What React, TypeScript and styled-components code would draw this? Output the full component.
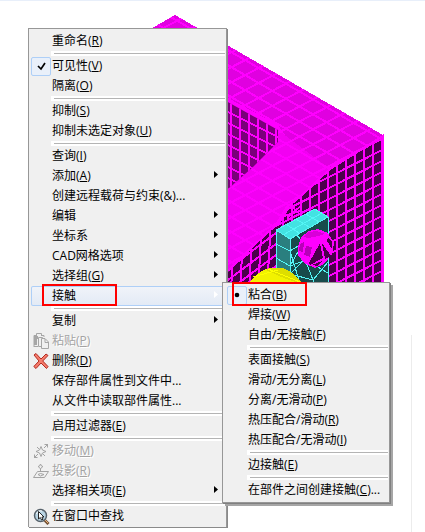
import React from "react";
import styled, { createGlobalStyle, css } from "styled-components";

const GlobalStyle = createGlobalStyle`
  * { box-sizing: border-box; }
  body { margin: 0; background: #fff; }
`;

const Page = styled.main`
  position: relative;
  min-height: 100vh;
  overflow: hidden;
  border-top: 1px solid #e8effa;
  font: 12px/20px "Open Sans", "Noto Sans CJK SC", sans-serif;
  color: #000;
`;

const Drawing = styled.svg`
  display: block;
`;

const PanelEdge = styled.div`
  position: absolute;
  top: 334px;
  bottom: 0;
  right: 13px;
  border-right: 1px solid #ececec;
`;

const MenuPanel = styled.ul<{ $sub?: boolean }>`
  position: absolute;
  margin: 0;
  list-style: none;
  background: #f0f0f0;
  border: 1px solid #979797;
  ${(p) =>
    p.$sub
      ? css`
          top: -4px;
          left: calc(100% - 3px);
          width: 168px;
          padding: 2px 1px 2px 4px;
          z-index: 2;
          box-shadow: 1px 1px 0 #808080, 3px 3px 0 #a6a6a6;
        `
      : css`
          top: 27px;
          left: 28px;
          width: 199px;
          padding: 2px 1px 1px 2px;
          border-bottom: 0;
          box-shadow: 1px 1px 0 #8a8a8a;
        `}
`;

const Item = styled.li`
  position: relative;
`;

const Divider = styled.li`
  height: 5px;
  margin-left: 20px;
  padding: 2px 0 2px 3px;
  background: #fff;
  &::before {
    content: "";
    display: block;
    height: 1px;
    background: #b4b4b4;
  }
`;

const Command = styled.button<{ $open?: boolean }>`
  display: grid;
  grid-template-columns: 21px 1fr 11px;
  align-items: center;
  width: 100%;
  height: 20px;
  padding: 0;
  border: 0;
  background: none;
  font: inherit;
  color: inherit;
  text-align: left;
  white-space: nowrap;
  &:disabled {
    color: #a3a3a3;
    text-shadow: 1px 1px 0 #fff;
  }
  ${(p) =>
    p.$open &&
    css`
      background: linear-gradient(#f1f4f9, #e2eaf5);
      box-shadow: inset 0 0 0 1px #aecff7;
      border-radius: 2px;
    `}
`;

const IconCell = styled.span<{ $checked?: boolean }>`
  display: grid;
  place-items: center;
  width: 20px;
  height: 19px;
  ${(p) =>
    p.$checked &&
    css`
      border: 1px solid #aecff7;
      border-radius: 2px;
      background: #e9f0fa;
    `}
`;

const Arrow = styled.svg<{ $light?: boolean }>`
  width: 4px;
  height: 7px;
  margin-bottom: 4px;
  fill: ${(p) => (p.$light ? "#fff" : "#000")};
`;

const Marker = styled.span<{ $sub?: boolean }>`
  position: absolute;
  z-index: 3;
  pointer-events: none;
  border: 2px solid #f00;
  top: ${(p) => (p.$sub ? "-3px" : "-2px")};
  left: ${(p) => (p.$sub ? "5px" : "11px")};
  width: 75px;
  height: ${(p) => (p.$sub ? 24 : 22)}px;
`;

type IconName = "check" | "dot" | "paste" | "delete" | "move" | "project" | "find";

function Icon({ name }: { name: IconName }) {
  switch (name) {
    case "check":
      return (
        <svg width="18" height="17" viewBox="0 0 18 17" fill="none">
          <path d="M6 8 9 11 13 5" stroke="#000" strokeWidth="1.7" />
        </svg>
      );
    case "dot":
      return (
        <svg width="18" height="17" viewBox="0 0 18 17">
          <circle cx="9" cy="8" r="2.3" />
        </svg>
      );
    case "paste":
      return (
        <svg width="16" height="16" viewBox="0 0 16 16" fill="none" stroke="#a6a6a6">
          <path d="M1 14V2.500H4M8 2.500H11V4M3.500 2.500V.500H8.500V2.500" />
          <path d="M1 13.500H5" />
          <path d="M1 3H5V6H4V12H1Z" fill="#a6a6a6" stroke="none" />
          <path d="M5.500 4.500H9.500V6M5.500 4.500V13.500H8" />
          <path d="M8.500 5.500H12L15.500 9V15.500H8.500Z" fill="#f0f0f0" />
          <path d="M12 6V9.500H15" />
        </svg>
      );
    case "delete":
      return (
        <svg width="16" height="16" viewBox="0 0 16 16">
          <path
            d="M1 2 3 .500 8 6 13 1 15 2.500 9.700 8 15 13.500 13.500 15.500 8 10 3 15.500 .800 13.500 6 8Z"
            fill="#f47c6c"
            stroke="#b42a20"
            strokeWidth="1"
          />
        </svg>
      );
    case "move":
      return (
        <svg width="16" height="16" viewBox="0 0 16 16" fill="none" stroke="#a3a3a3">
          <path d="M1 15 5 11M11 5 15 1M11.500 1.500H14.500V4.500M1.500 11.500V14.500H4.500" />
          <path d="M8 3.500 9.500 7 13 8.500 9.500 10 8 13.500 6.500 10 3 8.500 6.500 7ZM4 4 6 6M10 11 12 13" />
        </svg>
      );
    case "project":
      return (
        <svg width="16" height="16" viewBox="0 0 16 16" fill="none" stroke="#a3a3a3">
          <path d="M7.500 1 8.500 3 10 3.500 8.500 4.500 7.500 6 6.500 4.500 5 3.500 6.500 3ZM7.500 6V9" />
          <path d="M4.500 8.500H15.500L11.500 14.500H.500ZM5 11.500 7.500 10.500 11 11.500 7.500 13Z" />
        </svg>
      );
    case "find":
      return (
        <svg width="17" height="17" viewBox="0 0 17 17" fill="none">
          <path d="M11.500 12 15.500 16" stroke="#755335" strokeWidth="3" />
          <path d="M12 12 15 15" stroke="#e9b27a" strokeWidth="1" />
          <circle cx="7.500" cy="7.500" r="6" fill="#b9d5e4" stroke="#56616a" strokeWidth="1.500" />
          <path d="M3.500 6A4.500 4.500 0 0 1 9 3" stroke="#fff" />
          <path d="M5.500 3.500V11L7.300 9.500 8.600 12 10 11.200 8.900 9H11Z" fill="#fff" stroke="#111" strokeWidth=".9" />
        </svg>
      );
  }
}

type Entry =
  | "-"
  | {
      text: string;
      hot?: string;
      tail?: string;
      icon?: IconName;
      disabled?: boolean;
      arrow?: boolean;
      marked?: boolean;
      children?: Entry[];
    };

const contactEntries: Entry[] = [
  { text: "粘合", hot: "B", icon: "dot", marked: true },
  { text: "焊接", hot: "W" },
  { text: "自由/无接触", hot: "F" },
  "-",
  { text: "表面接触", hot: "S" },
  { text: "滑动/无分离", hot: "L" },
  { text: "分离/无滑动", hot: "P" },
  { text: "热压配合/滑动", hot: "R" },
  { text: "热压配合/无滑动", hot: "I" },
  "-",
  { text: "边接触", hot: "E" },
  "-",
  { text: "在部件之间创建接触", hot: "C", tail: "..." },
];

const entries: Entry[] = [
  { text: "重命名", hot: "R" },
  "-",
  { text: "可见性", hot: "V", icon: "check" },
  { text: "隔离", hot: "O" },
  "-",
  { text: "抑制", hot: "S" },
  { text: "抑制未选定对象", hot: "U" },
  "-",
  { text: "查询", hot: "I" },
  { text: "添加", hot: "A", arrow: true },
  { text: "创建远程载荷与约束(&)..." },
  { text: "编辑", arrow: true },
  { text: "坐标系", arrow: true },
  { text: "CAD网格选项", arrow: true },
  { text: "选择组", hot: "G", arrow: true },
  { text: "接触", arrow: true, marked: true, children: contactEntries },
  "-",
  { text: "复制", arrow: true },
  { text: "粘贴", hot: "P", icon: "paste", disabled: true },
  { text: "删除", hot: "D", icon: "delete" },
  { text: "保存部件属性到文件中..." },
  { text: "从文件中读取部件属性..." },
  "-",
  { text: "启用过滤器", hot: "E" },
  "-",
  { text: "移动", hot: "M", icon: "move", disabled: true },
  { text: "投影", hot: "R", icon: "project", disabled: true },
  { text: "选择相关项", hot: "E", arrow: true },
  "-",
  { text: "在窗口中查找", icon: "find" },
];

function Menu({ items, sub, label }: { items: Entry[]; sub?: boolean; label: string }) {
  return (
    <MenuPanel role="menu" aria-label={label} $sub={sub}>
      {items.map((entry, i) =>
        entry === "-" ? (
          <Divider key={i} role="separator" />
        ) : (
          <Item key={i} role="none">
            <Command
              type="button"
              role="menuitem"
              disabled={entry.disabled}
              $open={!!entry.children}
              aria-haspopup={entry.arrow ? "menu" : undefined}
              aria-expanded={entry.children ? true : undefined}
            >
              <IconCell $checked={entry.icon === "check" || entry.icon === "dot"}>
                {entry.icon && <Icon name={entry.icon} />}
              </IconCell>
              <span>
                {entry.text}
                {entry.hot && (
                  <>
                    (<u>{entry.hot}</u>)
                  </>
                )}
                {entry.tail}
              </span>
              {entry.arrow && (
                <Arrow viewBox="0 0 4 7" $light={!!entry.children}>
                  <path d="M0 0 4 3.500 0 7Z" />
                </Arrow>
              )}
            </Command>
            {entry.marked && <Marker $sub={sub} />}
            {entry.children && <Menu items={entry.children} sub label={entry.text} />}
          </Item>
        )
      )}
    </MenuPanel>
  );
}

const range = (n: number) => Array.from({ length: n }, (_, i) => i);

const topGrid = range(40)
  .map((i) => `M150 ${-160 + i * 15}l240 139M150 ${-10 + i * 15}l240 -126`)
  .join("");
const sideGrid =
  range(13)
    .map((i) => `M${382 - i * 9} 120V290`)
    .join("") +
  range(24)
    .map((i) => `M384 ${138 + i * 11}l-110 56`)
    .join("");
const filletGrid =
  range(8)
    .map((i) => `M${226 + i * 9} 220l-4 70`)
    .join("") +
  range(11)
    .map((i) => `M224 ${250 + i * 11}l56 -42`)
    .join("");
const holeGrid =
  range(7)
    .map((i) => `M${231 + i * 9} 90V200`)
    .join("") +
  range(14)
    .map((i) => `M224 ${88 + i * 11}l60 30`)
    .join("");

function MeshScene() {
  return (
    <Drawing width="425" height="290" viewBox="0 1 425 290" shapeRendering="crispEdges" role="img" aria-label="Mesh">
      <defs>
        <clipPath id="top">
          <path d="M175 15 383 135 330 169 300 197 276 225 228 270V200H140V35Z" />
        </clipPath>
        <clipPath id="side">
          <path d="M383 137V290H276V226L286 209 300 197 316 181 330 170 345 160Z" />
        </clipPath>
        <clipPath id="fillet">
          <path d="M228 272 240 258 252 247 266 234 276 225V290H228Z" />
        </clipPath>
        <clipPath id="hole">
          <path d="M226 101 278 130V142L253 167 228 189Z" />
        </clipPath>
      </defs>
      <path d="M175 15 383 135V290H140V35Z" fill="#f0f" />
      <g clipPath="url(#top)">
        <path d="M175 15 383 135 330 167 300 157 278 125 228 98H140V35Z" fill="#e000e0" />
        <path d="M278 130 330 169 276 225 228 270V189L278 142Z" fill="#f200f2" />
        <path d={topGrid} stroke="#f0f" strokeWidth="2" />
      </g>
      <g clipPath="url(#hole)">
        <path d="M220 90H290V200H220Z" fill="#7a007a" />
        <path d={holeGrid} stroke="#f0f" strokeWidth="2" />
      </g>
      <g clipPath="url(#side)">
        <path d="M270 130H384V290H270Z" fill="#4a004a" />
        <path d={sideGrid} stroke="#f0f" strokeWidth="2" />
        <path d="M278 225 294 199M287 218 302 205M296 212 291 202M278 218 300 211" stroke="#f0f" strokeWidth="2" />
      </g>
      <g clipPath="url(#fillet)">
        <path d="M220 220H280V290H220Z" fill="#4a004a" />
        <path d={filletGrid} stroke="#f0f" strokeWidth="2" />
      </g>
      <path d="M228 271 252 247 276 225 286 208 300 197 330 169 383 136V290" fill="none" stroke="#f0f" strokeWidth="2" />
      <path d="M276 230 315 209 328 217 290 239Z" fill="#43e2e2" />
      <path d="M276 230 290 239V290H276Z" fill="#2a7f7f" />
      <path d="M290 239 328 217V290H290Z" fill="#174b4b" />
      <path
        d="M276 230 315 209 328 217 290 239ZV290M290 239V290M328 217V290M276 244 290 251 303 243M276 258 290 266 306 260 328 273M276 271 290 279M290 251 302 290M290 266 303 243 297 235M313 280 290 274 306 258M306 262 313 280 328 262M313 280 318 290M286 224 299 233M296 219 309 227M306 214 319 222M283 235 322 213"
        fill="none"
        stroke="#55f5f5"
      />
      <path d="M298 247 301 237 309 231 318 229 328 233 334 243 332 254 324 264 315 268 304 263 298 255Z" fill="#f0f" />
      <path d="M303 237 309 232 317 231 325 234 318 236 309 238Z" fill="#d800d8" />
      <path d="M306 246 312 247 310 257 304 255ZM300 244 304 242 303 252 299 251Z" fill="#b900b9" />
      <path d="M320 243 323 258 310 265 309 263ZM322 243 331 256 325 259ZM328 237 332 242V249L327 241ZM312 265 322 261 318 266Z" fill="#4a004a" />
      <path d="M249 290V283Q257 272 269 268H283Q294 272 306 287V290Z" fill="#f2f200" />
      <path d="M269 268H283Q294 272 304 285L286 279 266 270Z" fill="#dede00" />
      <path d="M268 269 300 282M253 277 278 270" stroke="#ff0" fill="none" />
    </Drawing>
  );
}

export default function App() {
  return (
    <Page>
      <GlobalStyle />
      <MeshScene />
      <PanelEdge />
      <Menu items={entries} label="部件" />
    </Page>
  );
}
